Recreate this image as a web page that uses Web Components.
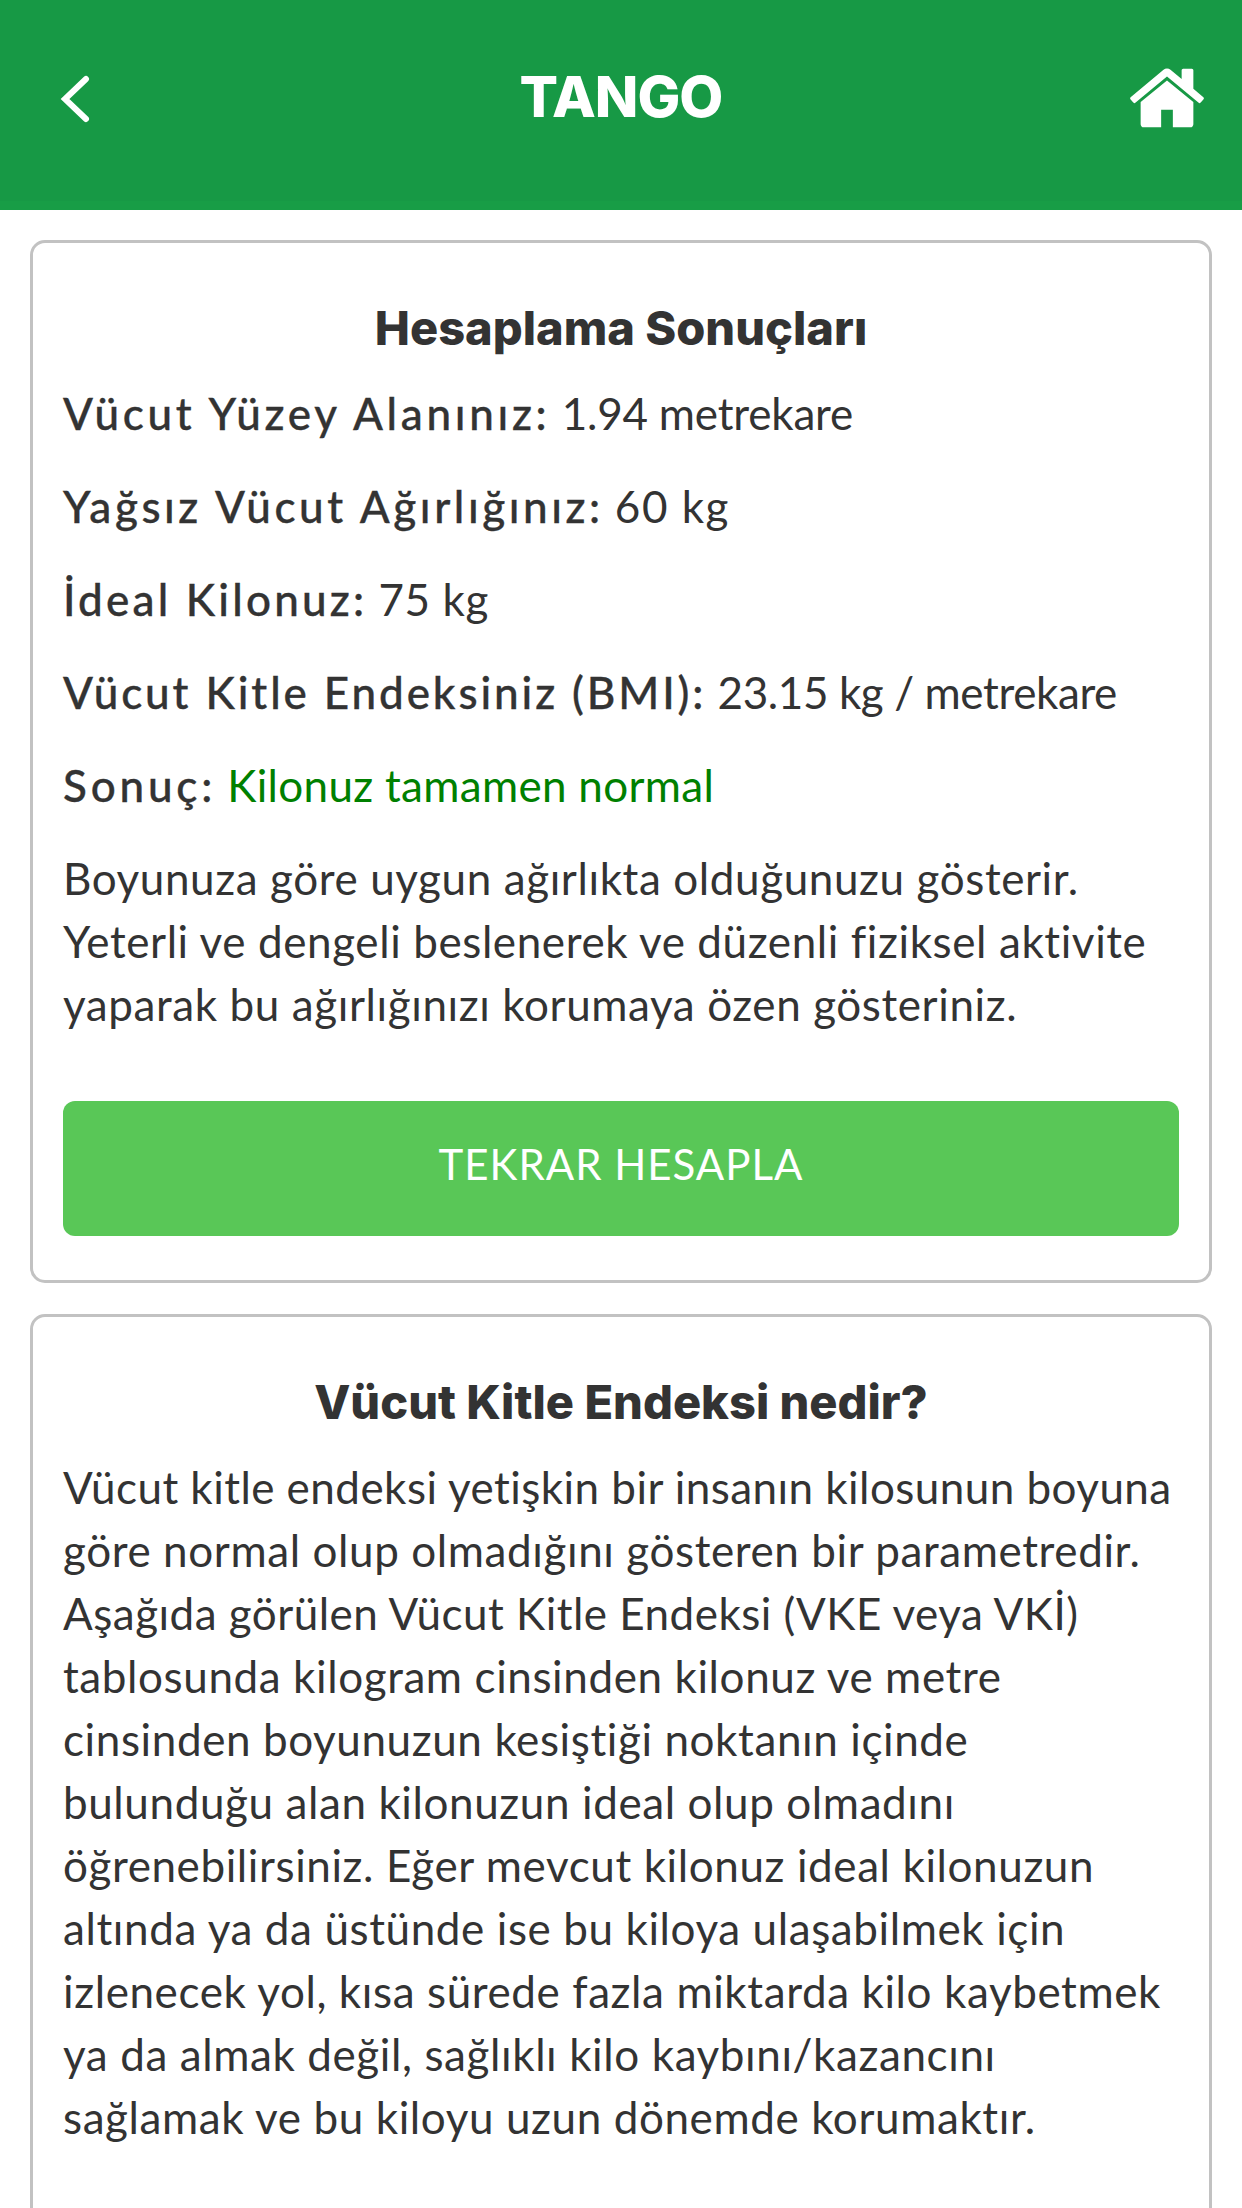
<!DOCTYPE html>
<html lang="tr">
<head>
<meta charset="utf-8">
<title>TANGO</title>
<style>
  html, body { margin: 0; height: 2208px; overflow: hidden; background: #fff; }
  body { font-family: "Lato", "Liberation Sans", sans-serif; color: #333; }
  .snug { letter-spacing: 0.45px; }
  .snugger { letter-spacing: 0.48px; }
</style>
</head>
<body>
<app-header title="TANGO"></app-header>
<app-content>
  <info-card heading="Hesaplama Sonuçları">
    <result-row label="Vücut Yüzey Alanınız:" style="--label-ls:3.7px;--value-ls:-0.2px">1.94 metrekare</result-row>
    <result-row label="Yağsız Vücut Ağırlığınız:" style="--label-ls:3.55px;--value-ls:1.5px">60 kg</result-row>
    <result-row label="İdeal Kilonuz:" style="--label-ls:3.2px;--value-ls:0.6px">75 kg</result-row>
    <result-row label="Vücut Kitle Endeksiniz (BMI):" style="--label-ls:2.9px;--value-ls:-0.4px">23.15 kg / metrekare</result-row>
    <result-row label="Sonuç:" tone="good" style="--label-ls:3.8px;--value-ls:0.3px">Kilonuz tamamen normal</result-row>
    <text-block>Boyunuza göre uygun ağırlıkta olduğunuzu gösterir.<br>Yeterli ve dengeli beslenerek ve düzenli fiziksel aktivite<br>yaparak bu ağırlığınızı korumaya özen gösteriniz.</text-block>
    <action-button>TEKRAR HESAPLA</action-button>
  </info-card>
  <info-card heading="Vücut Kitle Endeksi nedir?" class="tall">
    <text-block><span class="snug">Vücut kitle endeksi yetişkin bir insanın kilosunun boyuna</span><br>göre normal olup olmadığını gösteren bir parametredir.<br><span class="snugger">Aşağıda görülen Vücut Kitle Endeksi (VKE veya VKİ)</span><br>tablosunda kilogram cinsinden kilonuz ve metre<br>cinsinden boyunuzun kesiştiği noktanın içinde<br>bulunduğu alan kilonuzun ideal olup olmadını<br>öğrenebilirsiniz. Eğer mevcut kilonuz ideal kilonuzun<br>altında ya da üstünde ise bu kiloya ulaşabilmek için<br>izlenecek yol, kısa sürede fazla miktarda kilo kaybetmek<br>ya da almak değil, sağlıklı kilo kaybını/kazancını<br>sağlamak ve bu kiloyu uzun dönemde korumaktır.</text-block>
  </info-card>
</app-content>

<script>
class AppHeader extends HTMLElement {
  constructor() {
    super();
    this.attachShadow({ mode: 'open' });
  }

  connectedCallback() {
    this.shadowRoot.innerHTML = `
      <style>
        :host {
          display: grid;
          grid-template-columns: 1fr auto 1fr;
          align-items: center;
          box-sizing: border-box;
          height: 210px;
          padding: 0 34px 7px;
          background: #179945;
          border-bottom: 9px solid #189d46;
          color: #fff;
        }
        h1 {
          margin: 0;
          font-family: "Inter", "Liberation Sans", sans-serif;
          font-size: 57px;
          font-weight: 800;
          line-height: 70px;
          letter-spacing: -1px;
        }
        .back { width: 30px; height: 48px; margin: 4px 0 0 26px; }
        .home { width: 82px; height: 82px; margin-top: 2px; justify-self: end; }
      </style>
      <svg class="back" viewBox="0 0 30 48" fill="none" stroke="#fff" stroke-width="6" stroke-linecap="round" stroke-linejoin="miter">
        <path d="M26 4 5 24l21 20"/>
      </svg>
      <h1>${this.getAttribute('title')}</h1>
      <svg class="home" viewBox="0 0 1792 1792" fill="#fff">
        <path d="M1472 992v480q0 26-19 45t-45 19h-384v-384H768v384H384q-26 0-45-19t-19-45V992q0-1 .5-3t.5-3l575-474 575 474q1 2 1 6zm223-69l-62 74q-8 9-21 11h-3q-13 0-21-7L896 424l-692 577q-12 8-24 7-13-2-21-11l-62-74q-8-10-7-23.5t11-21.5l719-599q32-26 76-26t76 26l244 204V288q0-14 9-23t23-9h192q14 0 23 9t9 23v408l219 182q10 8 11 21.5t-7 23.5z"/>
      </svg>
    `;
  }
}

class AppContent extends HTMLElement {
  constructor() {
    super();
    this.attachShadow({ mode: 'open' }).innerHTML = `
      <style>
        :host {
          display: flex;
          flex-direction: column;
          gap: 31px;
          padding: 30px 30px 0;
        }
      </style>
      <slot></slot>
    `;
  }
}

class InfoCard extends HTMLElement {
  constructor() {
    super();
    this.attachShadow({ mode: 'open' });
  }

  connectedCallback() {
    this.shadowRoot.innerHTML = `
      <style>
        :host {
          display: block;
          box-sizing: border-box;
          padding: 30px;
          border: 3px solid #c2c2c2;
          border-radius: 15px;
          background: #fff;
        }
        /* second card runs on past the bottom of the screen */
        :host(.tall) { min-height: 1000px; }
        h2 {
          margin: 23px 0 23px;
          font-family: "Inter", "Liberation Sans", sans-serif;
          font-size: 47px;
          font-weight: 800;
          line-height: 63px;
          text-align: center;
          color: #333;
        }
      </style>
      <h2>${this.getAttribute('heading')}</h2>
      <slot></slot>
    `;
  }
}

class ResultRow extends HTMLElement {
  constructor() {
    super();
    this.attachShadow({ mode: 'open' });
  }

  connectedCallback() {
    const good = this.getAttribute('tone') === 'good';
    this.shadowRoot.innerHTML = `
      <style>
        :host {
          display: block;
          margin-bottom: 30px;
          font-size: 44px;
          line-height: 63px;
          white-space: nowrap;
          color: #333;
        }
        b {
          font-weight: 500;
          letter-spacing: var(--label-ls, 3.6px);
          -webkit-text-stroke: 0.35px #333;
        }
        span {
          letter-spacing: var(--value-ls, 0);
          color: ${good ? '#008000' : '#333'};
        }
      </style>
      <b>${this.getAttribute('label')}</b> <span><slot></slot></span>
    `;
  }
}

class TextBlock extends HTMLElement {
  constructor() {
    super();
    this.attachShadow({ mode: 'open' }).innerHTML = `
      <style>
        :host {
          display: block;
          font-size: 44px;
          line-height: 63px;
          letter-spacing: 0.6px;
          white-space: nowrap;
          color: #333;
        }
      </style>
      <slot></slot>
    `;
  }
}

class ActionButton extends HTMLElement {
  constructor() {
    super();
    this.attachShadow({ mode: 'open' }).innerHTML = `
      <style>
        :host {
          display: flex;
          align-items: center;
          justify-content: center;
          height: 135px;
          margin: 65px 0 14px;
          padding-bottom: 10px;
          box-sizing: border-box;
          border-radius: 12px;
          background: #59c757;
          color: #fff;
          font-size: 42px;
          letter-spacing: 1px;
          white-space: nowrap;
        }
      </style>
      <slot></slot>
    `;
  }
}

customElements.define('app-header', AppHeader);
customElements.define('app-content', AppContent);
customElements.define('info-card', InfoCard);
customElements.define('result-row', ResultRow);
customElements.define('text-block', TextBlock);
customElements.define('action-button', ActionButton);
</script>
</body>
</html>
